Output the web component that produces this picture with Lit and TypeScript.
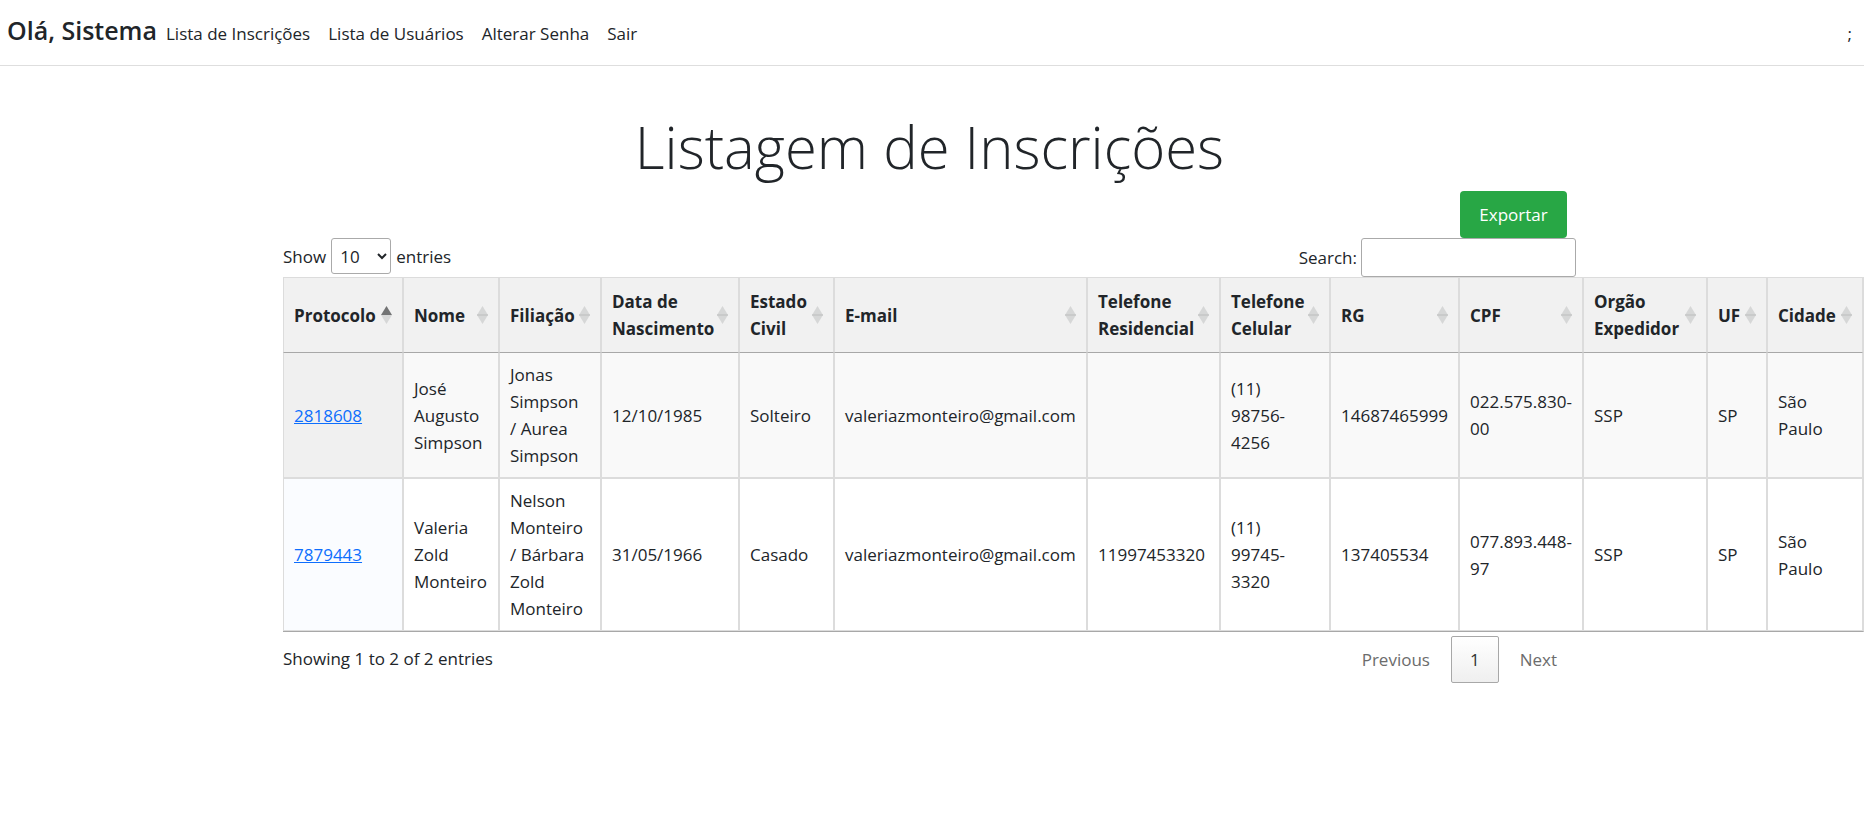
import { LitElement, html, css, svg } from "lit";
import { customElement, state } from "lit/decorators.js";
import { classMap } from "lit/directives/class-map.js";

interface Column {
  label: string;
  width: number;
}

const COLUMNS: Column[] = [
  { label: "Protocolo", width: 120 },
  { label: "Nome", width: 96 },
  { label: "Filiação", width: 102 },
  { label: "Data de Nascimento", width: 138 },
  { label: "Estado Civil", width: 95 },
  { label: "E-mail", width: 253 },
  { label: "Telefone Residencial", width: 133 },
  { label: "Telefone Celular", width: 110 },
  { label: "RG", width: 129 },
  { label: "CPF", width: 124 },
  { label: "Orgão Expedidor", width: 124 },
  { label: "UF", width: 60 },
  { label: "Cidade", width: 96 },
];

// Newlines inside a value are kept: both parents, and area code and number, start on their own lines.
const ROWS: string[][] = [
  [
    "2818608", "José Augusto Simpson", "Jonas Simpson\n/ Aurea Simpson", "12/10/1985", "Solteiro",
    "valeriazmonteiro@gmail.com", "", "(11)\n98756-\n4256", "14687465999", "022.575.830-00", "SSP", "SP", "São Paulo",
  ],
  [
    "7879443", "Valeria Zold Monteiro", "Nelson Monteiro\n/ Bárbara Zold Monteiro", "31/05/1966", "Casado",
    "valeriazmonteiro@gmail.com", "11997453320", "(11)\n99745-\n3320", "137405534", "077.893.448-97", "SSP", "SP", "São Paulo",
  ],
];

const LINKS = ["Lista de Inscrições", "Lista de Usuários", "Alterar Senha", "Sair"];

@customElement("app-root")
export class AppRoot extends LitElement {
  @state() private sortColumn = 0;
  @state() private ascending = true;

  static styles = css`
    :host {
      display: block;
      overflow-x: hidden;
      font-family: "Open Sans", "Noto Sans", sans-serif;
      font-size: 17px;
      line-height: 27px;
      color: #212529;
      background: #fff;
    }
    *, *::before, *::after { box-sizing: border-box; }
    button, input, select { font: inherit; color: inherit; }

    .topbar {
      display: flex;
      align-items: baseline;
      padding: 13px 12px 17px 7px;
      border-bottom: 1px solid #dedede;
    }
    .brand { margin: 0 9px 0 0; font-size: 25px; line-height: 35px; font-weight: 600; }
    .links { display: flex; flex: 1; gap: 18px; }
    .links a { color: inherit; text-decoration: none; }

    .content { padding: 0 288px 0 283px; }
    .title {
      margin: 43px 0 6px;
      text-align: center;
      font-size: 58px;
      line-height: 76px;
      font-weight: 300;
    }
    .actions { display: flex; justify-content: flex-end; padding-right: 9px; }
    .export {
      width: 107px;
      height: 47px;
      border: 0;
      border-radius: 4px;
      background: #28a745;
      color: #fff;
    }
    .controls { display: flex; justify-content: space-between; align-items: flex-start; }
    .length, .filter { display: flex; align-items: center; gap: 5px; }
    .length select {
      width: 60px;
      height: 36px;
      padding: 4px;
      border: 1px solid #aaa;
      border-radius: 3px;
      background: transparent;
    }
    .filter { gap: 4px; }
    .filter input {
      width: 215px;
      height: 39px;
      padding: 5px;
      border: 1px solid #aaa;
      border-radius: 3px;
      background: transparent;
    }

    .grid {
      width: 1581px;
      table-layout: fixed;
      border-collapse: separate;
      border-spacing: 0;
      border-right: 1px solid #dcdcdc;
      border-bottom: 1px solid #a8a8a8;
    }
    th, td {
      border: 1px solid #dcdcdc;
      text-align: left;
      vertical-align: middle;
    }
    th { padding: 10px; border-bottom-color: #a8a8a8; background: #f1f1f1; }
    td { padding: 8px 10px; white-space: pre-line; }
    tr:first-child td { border-top: 0; }
    .odd td { background: #f9f9f9; }
    .odd .sorted { background: #f0f0f0; }
    .even .sorted { background: #fafcff; }
    td a { color: #0d6efd; text-decoration: underline; }
    .sort {
      display: flex;
      align-items: center;
      justify-content: space-between;
      width: 100%;
      padding: 0;
      border: 0;
      background: none;
      font-weight: 700;
      text-align: left;
      cursor: pointer;
    }
    .sort svg { flex: none; width: 11px; height: 18px; }
    .arrow { fill: #d6d7d7; }
    .arrow.active { fill: #727374; }
    .middle { fill: #bcbebe; }

    .footer { display: flex; justify-content: space-between; padding-top: 4px; }
    .info { padding-top: 9px; }
    .pages { display: flex; gap: 2px; }
    .page {
      height: 47px;
      padding: 0 18px;
      border: 1px solid transparent;
      border-radius: 2px;
      background: none;
      color: #6c6c6c;
    }
    .page.current {
      border-color: #a8a8a8;
      background: linear-gradient(#fff, #efefef);
      color: #333;
    }
  `;

  private sortBy(index: number) {
    this.ascending = this.sortColumn === index ? !this.ascending : true;
    this.sortColumn = index;
  }

  private renderArrows(index: number) {
    const active = index === this.sortColumn;
    return html`<svg viewBox="0 0 11 18" aria-hidden="true">
      ${svg`
        <path class=${classMap({ arrow: true, active: active && this.ascending })} d="M5.5 0 11 9H0z"></path>
        <path class=${classMap({ arrow: true, active: active && !this.ascending })} d="M0 9h11L5.5 18z"></path>
        ${active ? "" : svg`<rect class="middle" y="8.5" width="11" height="1"></rect>`}
      `}
    </svg>`;
  }

  private renderCell(cell: string, index: number) {
    const content = index === 0 ? html`<a href="#">${cell}</a>` : cell;
    return html`<td class=${classMap({ sorted: index === this.sortColumn })}>${content}</td>`;
  }

  render() {
    const direction = this.ascending ? 1 : -1;
    const rows = [...ROWS].sort(
      (a, b) => direction * a[this.sortColumn].localeCompare(b[this.sortColumn]),
    );
    return html`
      <header class="topbar">
        <h5 class="brand">Olá, Sistema</h5>
        <nav class="links">${LINKS.map((l) => html`<a href="#">${l}</a>`)}</nav>
        <span>;</span>
      </header>
      <main class="content">
        <h1 class="title">Listagem de Inscrições</h1>
        <div class="actions"><button class="export" type="button">Exportar</button></div>
        <div class="controls">
          <div class="length">
            <label for="length">Show</label>
            <select id="length">
              <option>10</option>
              <option>25</option>
              <option>50</option>
              <option>100</option>
            </select>
            <span>entries</span>
          </div>
          <div class="filter">
            <label for="search">Search:</label>
            <input id="search" type="search" />
          </div>
        </div>
        <table class="grid">
          <colgroup>
            ${COLUMNS.map((c) => html`<col style="width:${c.width}px" />`)}
          </colgroup>
          <thead>
            <tr>
              ${COLUMNS.map(
                (c, i) => html`<th scope="col">
                  <button class="sort" type="button" @click=${() => this.sortBy(i)}>
                    <span>${c.label}</span>${this.renderArrows(i)}
                  </button>
                </th>`,
              )}
            </tr>
          </thead>
          <tbody>
            ${rows.map(
              (row, r) => html`<tr class=${r % 2 ? "even" : "odd"}>
                ${row.map((cell, i) => this.renderCell(cell, i))}
              </tr>`,
            )}
          </tbody>
        </table>
        <div class="footer">
          <div class="info">Showing 1 to 2 of 2 entries</div>
          <div class="pages">
            <button class="page" type="button">Previous</button>
            <button class="page current" type="button">1</button>
            <button class="page" type="button">Next</button>
          </div>
        </div>
      </main>
    `;
  }
}
